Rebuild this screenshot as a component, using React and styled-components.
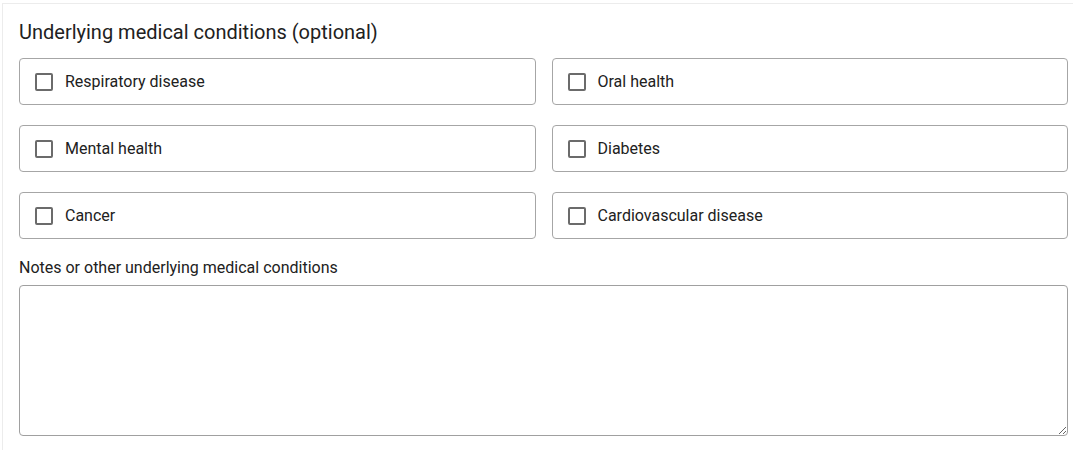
import React, { useState } from "react";
import styled, { createGlobalStyle } from "styled-components";

const GlobalStyle = createGlobalStyle`
  html, body {
    margin: 0;
    padding: 0;
    background: #fff;
    overflow: hidden;
  }
  body {
    font-family: Roboto, "Liberation Sans", Arial, sans-serif;
    color: #212121;
  }
`;

const Card = styled.section`
  margin: 3px 0 0 2px;
  border-top: 1px solid #ececec;
  border-left: 1px solid #ececec;
  padding: 16px 5px 16px 16px;
  background: #fff;
`;

const Title = styled.h2`
  margin: 0 0 14px;
  font-size: 20px;
  font-weight: 400;
  line-height: 24px;
  color: #212121;
`;

const Grid = styled.div`
  display: grid;
  grid-template-columns: 1fr 1fr;
  gap: 20px 16px;
`;

const Option = styled.label`
  display: flex;
  align-items: center;
  gap: 12px;
  height: 47px;
  box-sizing: border-box;
  padding-left: 15px;
  border: 1px solid #a6a6a6;
  border-radius: 4px;
  font-size: 16px;
  color: #212121;
  cursor: pointer;
`;

const HiddenInput = styled.input`
  position: absolute;
  opacity: 0;
  width: 0;
  height: 0;
`;

const Box = styled.span`
  width: 18px;
  height: 18px;
  box-sizing: border-box;
  border: 2px solid ${(p) => (p.$checked ? "#1976d2" : "#6b6b6b")};
  background: ${(p) => (p.$checked ? "#1976d2" : "transparent")};
  border-radius: 2px;
  flex-shrink: 0;
`;

const NotesLabel = styled.label`
  display: block;
  margin: 19px 0 7px;
  font-size: 16px;
  line-height: 20px;
  color: #212121;
`;

const Notes = styled.textarea`
  display: block;
  width: 100%;
  height: 151px;
  box-sizing: border-box;
  border: 1px solid #a0a0a0;
  border-radius: 4px;
  padding: 10px 12px;
  font-family: inherit;
  font-size: 16px;
  resize: vertical;
  outline: none;
`;

const conditions = [
  "Respiratory disease",
  "Oral health",
  "Mental health",
  "Diabetes",
  "Cancer",
  "Cardiovascular disease",
];

const App = () => {
  const [checked, setChecked] = useState({});

  const toggle = (name) => {
    setChecked({ ...checked, [name]: !checked[name] });
  };

  return (
    <>
      <GlobalStyle />
      <Card>
        <Title>Underlying medical conditions (optional)</Title>
        <Grid>
          {conditions.map((c) => (
            <Option key={c}>
              <HiddenInput
                type="checkbox"
                checked={!!checked[c]}
                onChange={() => toggle(c)}
              />
              <Box $checked={!!checked[c]} />
              {c}
            </Option>
          ))}
        </Grid>
        <NotesLabel htmlFor="notes">
          Notes or other underlying medical conditions
        </NotesLabel>
        <Notes id="notes" />
      </Card>
    </>
  );
};

export default App;
